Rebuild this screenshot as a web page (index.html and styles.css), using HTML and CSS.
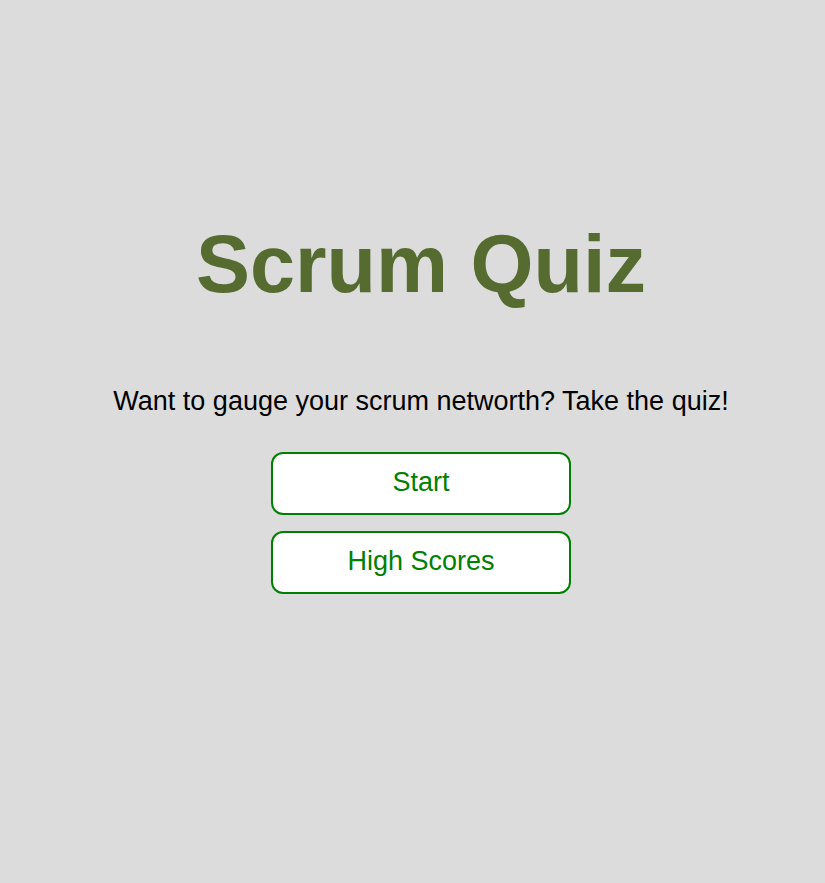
FILE: index.html
```html
<!DOCTYPE html>
<html>
<head>
<meta charset="utf-8">
<link rel="stylesheet" href="styles.css">
</head>
<body>
<main class="page">
  <h1 class="title">Scrum Quiz</h1>
  <p class="intro">Want to gauge your scrum networth? Take the quiz!</p>
  <div class="actions">
    <button class="btn">Start</button>
    <button class="btn">High Scores</button>
  </div>
</main>
</body>
</html>
```
FILE: styles.css
```css
html, body {
  margin: 0;
  padding: 0;
  background: #dcdcdc;
  font-family: "Liberation Sans", Arial, sans-serif;
}
.page {
  display: flex;
  flex-direction: column;
  align-items: center;
  padding-top: 216px;
  padding-left: 17px;
}
.title {
  margin: 0;
  font-size: 81px;
  font-weight: bold;
  color: #556b2f;
  line-height: 96px;
}
.intro {
  margin: 74px 0 0;
  font-size: 27px;
  line-height: 31px;
  color: #000;
}
.actions {
  display: flex;
  flex-direction: column;
  gap: 16px;
  margin-top: 35px;
}
.btn {
  width: 300px;
  height: 63px;
  background: #fff;
  border: 2px solid #008000;
  border-radius: 12px;
  color: #008000;
  font-family: "Liberation Sans", Arial, sans-serif;
  font-size: 27px;
  padding: 0 0 3px;
}
```
